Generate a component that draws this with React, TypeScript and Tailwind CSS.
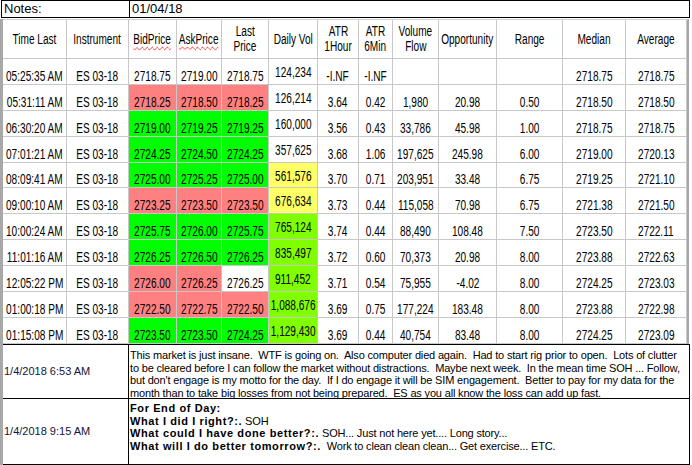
import React from "react";

type Tone = "r" | "g" | "y" | "l" | "";

const tones: Record<string, string> = {
  r: "bg-[#ff8080]",
  g: "bg-[#00ff00]",
  y: "bg-[#ffff66]",
  l: "bg-[#80ff00]",
  "": "bg-white",
};

type Row = {
  time: string;
  bid: [string, Tone];
  ask: [string, Tone];
  last: [string, Tone];
  vol: [string, Tone];
  rest: string[];
};

const rows: Row[] = [
  { time: "05:25:35 AM", bid: ["2718.75", ""], ask: ["2719.00", ""], last: ["2718.75", ""], vol: ["124,234", ""], rest: ["-I.NF", "-I.NF", "", "", "", "2718.75", "2718.75"] },
  { time: "05:31:11 AM", bid: ["2718.25", "r"], ask: ["2718.50", "r"], last: ["2718.25", "r"], vol: ["126,214", ""], rest: ["3.64", "0.42", "1,980", "20.98", "0.50", "2718.50", "2718.50"] },
  { time: "06:30:20 AM", bid: ["2719.00", "g"], ask: ["2719.25", "g"], last: ["2719.25", "g"], vol: ["160,000", ""], rest: ["3.56", "0.43", "33,786", "45.98", "1.00", "2718.75", "2718.75"] },
  { time: "07:01:21 AM", bid: ["2724.25", "g"], ask: ["2724.50", "g"], last: ["2724.25", "g"], vol: ["357,625", ""], rest: ["3.68", "1.06", "197,625", "245.98", "6.00", "2719.00", "2720.13"] },
  { time: "08:09:41 AM", bid: ["2725.00", "g"], ask: ["2725.25", "g"], last: ["2725.00", "g"], vol: ["561,576", "y"], rest: ["3.70", "0.71", "203,951", "33.48", "6.75", "2719.25", "2721.10"] },
  { time: "09:00:10 AM", bid: ["2723.25", "r"], ask: ["2723.50", "r"], last: ["2723.50", "r"], vol: ["676,634", "y"], rest: ["3.73", "0.44", "115,058", "70.98", "6.75", "2721.38", "2721.50"] },
  { time: "10:00:24 AM", bid: ["2725.75", "g"], ask: ["2726.00", "g"], last: ["2725.75", "g"], vol: ["765,124", "l"], rest: ["3.74", "0.44", "88,490", "108.48", "7.50", "2723.50", "2722.11"] },
  { time: "11:01:16 AM", bid: ["2726.25", "g"], ask: ["2726.50", "g"], last: ["2726.25", "g"], vol: ["835,497", "l"], rest: ["3.72", "0.60", "70,373", "20.98", "8.00", "2723.88", "2722.63"] },
  { time: "12:05:22 PM", bid: ["2726.00", "r"], ask: ["2726.25", "r"], last: ["2726.25", ""], vol: ["911,452", "l"], rest: ["3.71", "0.54", "75,955", "-4.02", "8.00", "2724.25", "2723.03"] },
  { time: "01:00:18 PM", bid: ["2722.50", "r"], ask: ["2722.75", "r"], last: ["2722.50", "r"], vol: ["1,088,676", "l"], rest: ["3.69", "0.75", "177,224", "183.48", "8.00", "2723.88", "2722.98"] },
  { time: "01:15:08 PM", bid: ["2723.50", "g"], ask: ["2723.50", "g"], last: ["2724.25", "g"], vol: ["1,129,430", "l"], rest: ["3.69", "0.44", "40,754", "83.48", "8.00", "2724.25", "2723.09"] },
];

// squeezed text, the sheet renders its font narrow
const N = ({ children }: { children: React.ReactNode }) => (
  <span className="inline-block scale-x-[0.72] whitespace-nowrap">{children}</span>
);

const Cell = ({ text, tone = "", mid = false }: { text: string; tone?: Tone; mid?: boolean }) => (
  <div
    className={`h-[25.9px] flex justify-center border-r border-b border-[#c8c8c8] ${tones[tone]} ${
      mid ? "items-center pt-[1px]" : "items-end"
    }`}
  >
    <N>{text}</N>
  </div>
);

const Head = ({ lines, wavy = false }: { lines: string[]; wavy?: boolean }) => (
  <div className="h-[39px] flex flex-col items-center justify-center leading-[15px] border-r border-b border-[#c8c8c8]">
    {lines.map((l) => (
      <N key={l}>
        {wavy ? <span className="underline decoration-wavy decoration-red-500 decoration-1 underline-offset-2">{l}</span> : l}
      </N>
    ))}
  </div>
);

const headers: { lines: string[]; wavy?: boolean }[] = [
  { lines: ["Time Last"] },
  { lines: ["Instrument"] },
  { lines: ["BidPrice"], wavy: true },
  { lines: ["AskPrice"], wavy: true },
  { lines: ["Last", "Price"] },
  { lines: ["Daily Vol"] },
  { lines: ["ATR", "1Hour"] },
  { lines: ["ATR", "6Min"] },
  { lines: ["Volume", "Flow"] },
  { lines: ["Opportunity"] },
  { lines: ["Range"] },
  { lines: ["Median"] },
  { lines: ["Average"] },
];

const noteLines = [
  "This market is just insane.  WTF is going on.  Also computer died again.  Had to start rig prior to open.  Lots of clutter",
  "to be cleared before I can follow the market without distractions.  Maybe next week.  In the mean time SOH ... Follow,",
  "but don't engage is my motto for the day.  If I do engage it will be SIM engagement.  Better to pay for my data for the",
  "month than to take big losses from not being prepared.  ES as you all know the loss can add up fast.",
];

const B = ({ children }: { children: React.ReactNode }) => (
  <b className="font-bold tracking-[0.6px]">{children}</b>
);

export default function App() {
  return (
    <div className="w-[692px] h-[465px] bg-white overflow-hidden text-black font-['Liberation_Sans',Arial,sans-serif]">
      <div className="ml-[1px] w-[689px] h-[18px] border border-black flex text-[13px] leading-[16px]">
        <div className="w-[128px] shrink-0 pl-[2px] border-r border-black">Notes:</div>
        <div className="pl-[2px]">01/04/18</div>
      </div>

      <div className="mt-[1px] border-l-[3px] border-[#a8a8a8]">
        <div className="w-[686px] border-r-2 border-[#a8a8a8] border-t border-t-[#d0d0d0]">
          <div className="grid grid-cols-[64px_62px_48px_45px_47px_49px_41px_34px_46px_58px_66px_63px_61px] text-[14px] leading-[16px]">
            {headers.map((h) => (
              <Head key={h.lines.join()} lines={h.lines} wavy={h.wavy} />
            ))}
            {rows.map((r) => (
              <React.Fragment key={r.time}>
                <Cell text={r.time} />
                <Cell text="ES 03-18" />
                <Cell text={r.bid[0]} tone={r.bid[1]} />
                <Cell text={r.ask[0]} tone={r.ask[1]} />
                <Cell text={r.last[0]} tone={r.last[1]} />
                <Cell text={r.vol[0]} tone={r.vol[1]} mid />
                {r.rest.map((v, i) => (
                  <Cell key={i} text={v} />
                ))}
              </React.Fragment>
            ))}
          </div>
        </div>

        <div className="w-[687px] border-t border-r border-b border-black text-[11px] leading-[12.7px]">
          <div className="flex h-[54px] border-b border-black">
            <div className="w-[126px] shrink-0 border-r border-black flex items-center pl-[1px] text-[#14143c]">1/4/2018 6:53 AM</div>
            <div className="min-w-0 overflow-hidden pl-[1px] pt-[4px] whitespace-pre tracking-[-0.17px]">
              {noteLines.map((l) => (
                <div key={l}>{l}</div>
              ))}
            </div>
          </div>
          <div className="flex h-[65px]">
            <div className="w-[126px] shrink-0 border-r border-black flex items-center pl-[1px] text-[#14143c]">1/4/2018 9:15 AM</div>
            <div className="min-w-0 overflow-hidden pl-[1px] pt-[3px] whitespace-pre tracking-[-0.17px]">
              <div>
                <B>For End of Day:</B>
              </div>
              <div>
                <B>What I did I right?:.</B> SOH
              </div>
              <div>
                <B>What could I have done better?:.</B> SOH... Just not here yet.... Long story...
              </div>
              <div>
                <B>What will I do better tomorrow?:.</B>  Work to clean clean clean... Get exercise... ETC.
              </div>
            </div>
          </div>
        </div>
      </div>
    </div>
  );
}
